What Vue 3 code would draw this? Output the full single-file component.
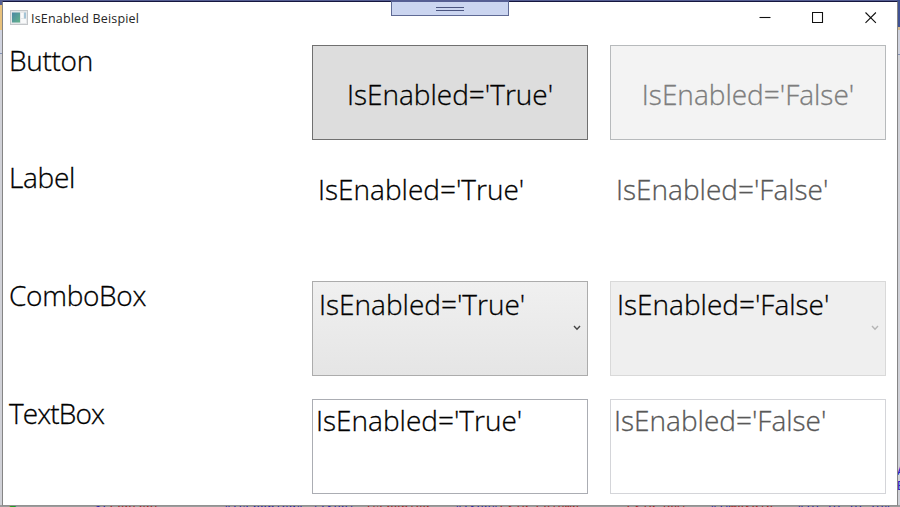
<script setup>
const rows = [
  { name: 'Button', kind: 'button' },
  { name: 'Label', kind: 'label' },
  { name: 'ComboBox', kind: 'combo' },
  { name: 'TextBox', kind: 'textbox' },
]
const states = [
  { text: "IsEnabled='True'", cls: 'on' },
  { text: "IsEnabled='False'", cls: 'off' },
]
</script>

<template>
  <div class="desktop">
    <div class="ide-top"></div>
    <div class="ide-tab"></div>
    <div class="ide-right"></div>
    <div class="ide-side"><span>A</span><span>E</span></div>
    <div class="code-line"><i class="green">■</i><i class="blue">&lt;L</i><i class="red">Content</i><i class="blue">"IsEnabled"</i><i class="blue">'True'</i><i class="red">IsEnabled</i><i class="blue">"True"</i><i class="red">Grid.Column</i><i class="red">Grid.Row</i><i class="blue">"1"</i><i class="red">Margin</i><i class="blue">"10,10,10,10"</i></div>
    <div class="window">
      <header class="titlebar">
        <svg class="app-icon" width="18" height="15" viewBox="0 0 18 15">
          <defs>
            <linearGradient id="pane" x1="0" y1="0" x2="1" y2="1">
              <stop offset="0" stop-color="#4b87a5" />
              <stop offset="1" stop-color="#63b38b" />
            </linearGradient>
          </defs>
          <rect x=".5" y=".5" width="17" height="14" fill="#e5e7e9" stroke="#c3c6c9" />
          <rect x="2" y="2.5" width="8" height="10" fill="url(#pane)" />
          <rect x="11" y="3" width="2.5" height="5" fill="#f9fafb" />
          <rect x="14" y="2.5" width="2" height="6" fill="#a5c4d6" />
          <rect x="11" y="9" width="5" height="4" fill="#f8f9fa" />
        </svg>
        <span class="title">IsEnabled Beispiel</span>
        <div class="controls">
          <svg width="12" height="12" viewBox="0 0 12 12"><path d="M.5 5.5h11" /></svg>
          <svg width="12" height="12" viewBox="0 0 12 12"><path d="M.5 .5h10v10H.5z" /></svg>
          <svg width="12" height="12" viewBox="0 0 12 12"><path d="M.5 .5l10.4 10.4M10.9 .5L.5 10.9" /></svg>
        </div>
      </header>
      <main class="grid">
        <template v-for="row in rows" :key="row.name">
          <div class="name" :class="`${row.kind}-name`">{{ row.name }}</div>
          <div v-for="s in states" :key="s.cls" class="control" :class="[row.kind, s.cls]">
            <span>{{ s.text }}</span>
            <svg v-if="row.kind === 'combo'" class="chevron" width="8" height="6" viewBox="0 0 8 6">
              <path d="M1 1l3 3.2L7 1" />
            </svg>
          </div>
        </template>
      </main>
    </div>
    <div class="debug-bar"><div class="grip"></div></div>
  </div>
</template>

<style>
body {
  margin: 0;
  overflow: hidden;
}
</style>

<style scoped>
.desktop {
  position: relative;
  box-sizing: border-box;
  width: 900px;
  height: 507px;
  padding: 1px 2px 1px 2px;
  overflow: hidden;
  background: #d0d1d7;
  font-family: 'Open Sans', 'Noto Sans', sans-serif;
}
.ide-top {
  position: absolute;
  left: 0;
  top: 0;
  width: 900px;
  height: 5px;
  background: #555e93;
}
.ide-tab {
  position: absolute;
  left: 0;
  top: 5px;
  width: 3px;
  height: 49px;
  background: linear-gradient(#e8c17c 0 25px, #d0d3df 25px 48px, #8290b3 48px);
}
.ide-right {
  position: absolute;
  right: 0;
  top: 0;
  width: 3px;
  height: 55px;
  background: linear-gradient(#3f5193 0 27px, #d8bc91 27px 30px, #d0d3df 30px 54px, #8290b3 54px);
}
.ide-side {
  position: absolute;
  left: 897px;
  top: 464px;
  display: flex;
  flex-direction: column;
  font: 13px/15px 'Liberation Mono', monospace;
  color: #2b20c4;
}
.window {
  position: relative;
  box-sizing: border-box;
  width: 896px;
  height: 505px;
  border: 1px solid #858585;
  border-top: 1px solid #15163f;
  border-bottom-color: #929292;
  background: #fff;
}
.titlebar {
  display: flex;
  align-items: center;
  height: 32px;
  padding: 0 20px 0 7px;
}
.title {
  margin-left: 3px;
  padding-top: 1px;
  font-size: 12.5px;
  line-height: 16px;
  letter-spacing: 0.18px;
  color: #262626;
  white-space: nowrap;
}
.app-icon {
  margin-top: -1px;
}
.controls {
  display: flex;
  gap: 41px;
  margin-left: auto;
}
.controls svg {
  fill: none;
  stroke: #111;
  stroke-width: 1.1;
}
.grid {
  display: grid;
  grid-template-columns: 298px 298px 298px;
  grid-template-rows: repeat(4, 118px);
  font-size: 28px;
  font-weight: 300;
  line-height: 38px;
  color: #000;
  -webkit-text-stroke: 0.3px currentColor;
}
.name {
  padding: 6px 0 0 6px;
  letter-spacing: -0.3px;
}
.button-name {
  padding-top: 7px;
}
.textbox-name {
  letter-spacing: -0.9px;
}
.control {
  display: flex;
  box-sizing: border-box;
  width: 276px;
  height: 95px;
  margin: 11px 0 0 11px;
  white-space: nowrap;
}
.button {
  align-items: center;
  justify-content: center;
  padding-top: 3px;
  border: 1px solid #707070;
  background: #ddd;
}
.button.off {
  border-color: #b7babc;
  background: #f3f3f3;
  color: #7d7d7d;
}
.label {
  padding: 7px 0 0 6px;
}
.label.off,
.textbox.off {
  color: #585858;
}
.combo {
  justify-content: space-between;
  padding: 3px 6px 0 6px;
  border: 1px solid #acacac;
  background: linear-gradient(#f0f0f0, #e5e5e5);
}
.combo.off {
  border-color: #d9d9d9;
  background: #efefef;
}
.chevron {
  margin-top: 40px;
  fill: none;
  stroke: #444;
  stroke-width: 1.4;
}
.off .chevron {
  stroke: #b5b5b5;
}
.textbox {
  padding: 1px 0 0 3px;
  border: 1px solid #abadb3;
}
.textbox.off {
  border-color: #d4d5d9;
}
.debug-bar {
  position: absolute;
  left: 391px;
  top: 0;
  box-sizing: border-box;
  display: flex;
  justify-content: center;
  width: 118px;
  height: 16px;
  padding-top: 6px;
  border: 1px solid #5f6a95;
  border-top: 2px solid #555e93;
  background: #cbd5f0;
}
.grip {
  box-sizing: border-box;
  width: 28px;
  height: 4px;
  margin-top: -1px;
  border: solid #4a5480;
  border-width: 1px 0;
}
.code-line {
  position: absolute;
  left: 0;
  top: 505px;
  display: grid;
  grid-template-columns: 95px 15px 114px 88px 53px 90px 45px 127px 83px 20px 67px 103px;
  width: 900px;
  height: 2px;
  overflow: hidden;
  background: #9c9c9c;
  font: 12px/8px 'Liberation Mono', monospace;
  white-space: nowrap;
}
.code-line i {
  overflow: hidden;
  font-style: normal;
}
.code-line .green {
  padding-left: 9px;
  color: #239a23;
}
.code-line .blue {
  color: #2018a8;
}
.code-line .red {
  color: #a51c1c;
}
</style>
